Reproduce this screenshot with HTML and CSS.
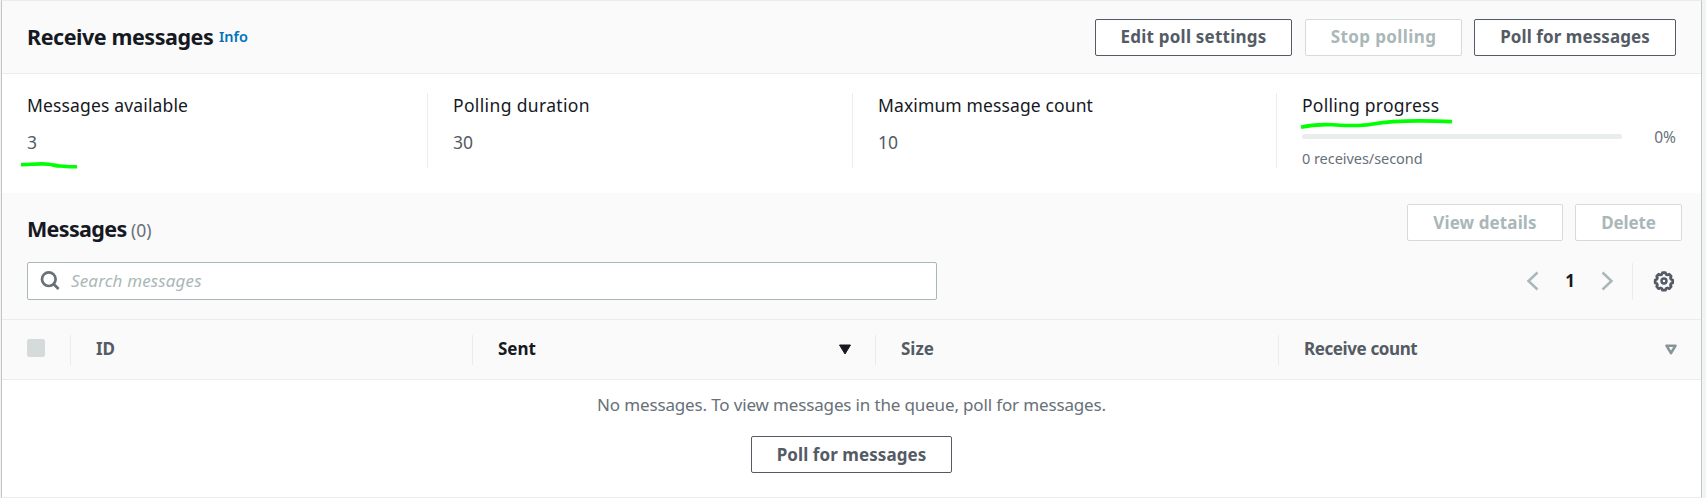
FILE: index.html
```html
<!DOCTYPE html>
<html lang="en">
<head>
<meta charset="utf-8">
<title>Receive messages</title>
<link rel="stylesheet" href="styles.css">
</head>
<body>
<main class="panel">
  <header class="panel-header">
    <h2 class="title title-main">Receive messages</h2>
    <a class="info">Info</a>
    <div class="actions">
      <button class="btn btn-edit">Edit poll settings</button>
      <button class="btn btn-stop" disabled>Stop polling</button>
      <button class="btn btn-poll">Poll for messages</button>
    </div>
  </header>

  <section class="stats">
    <div class="stat">
      <div class="label">Messages available</div>
      <div class="value">3</div>
      <svg class="mark mark-count" width="60" height="10" viewBox="0 0 60 10"><path d="M1 4.6C10 4.6 20 3.2 29 4.2C34 5 36 6 40 6C46 6 50 7.4 57 6.6"/></svg>
    </div>
    <div class="stat">
      <div class="label label-duration">Polling duration</div>
      <div class="value">30</div>
    </div>
    <div class="stat">
      <div class="label label-max">Maximum message count</div>
      <div class="value">10</div>
    </div>
    <div class="stat stat-progress">
      <div class="label label-progress">Polling progress</div>
      <div class="progress"><div class="track"></div><span class="percent">0%</span></div>
      <div class="rate">0 receives/second</div>
      <svg class="mark mark-progress" width="156" height="14" viewBox="0 0 156 14"><path d="M2 9.2C12 6.8 23 6.2 34 6.8C48 7.6 60 8.6 74 6C95 2.2 118 2.2 153 3.6"/></svg>
    </div>
  </section>

  <section class="messages-header">
    <div class="messages-top">
      <h2 class="title title-messages">Messages</h2>
      <span class="count">(0)</span>
      <div class="actions">
        <button class="btn btn-view" disabled>View details</button>
        <button class="btn btn-delete" disabled>Delete</button>
      </div>
    </div>
    <div class="tools">
      <div class="search">
        <svg width="20" height="20" viewBox="0 0 20 20"><circle cx="8.8" cy="8.2" r="6.8"/><path d="M13.6 13l5 5"/></svg>
        <span class="placeholder">Search messages</span>
      </div>
      <div class="pager">
        <svg class="chevron" width="13" height="20" viewBox="0 0 13 20"><path d="M11.5 1.5L2.5 10l9 8.5"/></svg>
        <span class="page">1</span>
        <svg class="chevron" width="13" height="20" viewBox="0 0 13 20"><path d="M1.5 1.5l9 8.5-9 8.5"/></svg>
        <span class="pager-rule"></span>
        <svg class="gear" width="22" height="22" viewBox="0 0 22 22">
          <path d="M9.4 2.1h3.2l.7 1.8 1.5.6 1.800-.8 2.200 2.200-.8 1.800.6 1.500 1.800.7v3.200l-1.800.7-.6 1.500.8 1.800-2.200 2.200-1.800-.8-1.500.6-.7 1.800H9.400l-.7-1.800-1.500-.6-1.800.8-2.200-2.200.8-1.800-.6-1.500-1.800-.7V9.900l1.800-.7.6-1.500-.8-1.800 2.200-2.200 1.800.8 1.500-.6z" transform="translate(.7 .75) scale(.93)" stroke-width="2.900"/>
          <circle cx="11" cy="11" r="2.500" stroke-width="2.400"/>
        </svg>
      </div>
    </div>
  </section>

  <div class="table-head">
    <div class="cell"><span class="checkbox"></span></div>
    <div class="cell"><span class="head">ID</span></div>
    <div class="cell sorted"><span class="head">Sent</span><svg width="13" height="11" viewBox="0 0 13 11"><path d="M1.500 1h11L7 10z" fill="#16191f" stroke="#16191f" stroke-linejoin="round"/></svg></div>
    <div class="cell"><span class="head">Size</span></div>
    <div class="cell"><span class="head head-receive">Receive count</span><svg width="13" height="11" viewBox="0 0 13 11"><path d="M2.500 1.700h9L7 9.200z" fill="none" stroke="#879596" stroke-width="2.600" stroke-linejoin="round"/></svg></div>
  </div>

  <section class="empty">
    <p class="empty-text">No messages. To view messages in the queue, poll for messages.</p>
    <button class="btn btn-poll btn-empty">Poll for messages</button>
  </section>
</main>
</body>
</html>
```
FILE: styles.css
```css
* { box-sizing: border-box; }
body {
  margin: 0;
  height: 498px;
  padding: 0 4px 0 1px;
  overflow: hidden;
  background: #f2f3f3;
  color: #16191f;
  font-family: "Noto Sans", "Open Sans", sans-serif;
  font-size: 17px;
  line-height: 24px;
}
.panel {
  height: 498px;
  border: 1px solid #eaeded;
  border-left-color: #c0c6c6;
  border-right-color: #c0c6c6;
  background: #fff;
}
.panel-header {
  display: flex;
  align-items: center;
  height: 73px;
  padding: 0 25px;
  border-bottom: 1px solid #eaeded;
  background: #fafafa;
}
.title { margin: 0; font-size: 21.5px; font-weight: 700; line-height: 28px; white-space: nowrap; }
.title-main { width: 192px; letter-spacing: -0.45px; }
.title-messages { width: 104px; letter-spacing: -0.65px; }
.info { color: #0073bb; font-size: 14.5px; font-weight: 600; line-height: 22px; margin-bottom: 2px; }
.actions { display: flex; gap: 12px; margin-left: auto; }
.btn {
  height: 37px;
  padding: 0;
  border: 1px solid #545b64;
  border-radius: 2px;
  background: #fff;
  color: #545b64;
  font: 700 17px/24px "Noto Sans", "Open Sans", sans-serif;
  white-space: nowrap;
}
.btn:disabled { border-color: #d5dbdb; color: #aab7b8; }
.btn-edit { width: 197px; margin-right: 1px; letter-spacing: 0.22px; }
.btn-stop { width: 157px; letter-spacing: 0.4px; }
.btn-poll { width: 202px; letter-spacing: 0.08px; }
.btn-empty { width: 201px; }
.btn-view { width: 156px; letter-spacing: 0.1px; }
.btn-delete { width: 107px; letter-spacing: -0.1px; }
.stats {
  display: grid;
  grid-template-columns: 425px 425px 424px 1fr;
  height: 119px;
  padding: 19px 0 25px;
}
.stat { position: relative; height: 75px; padding-left: 25px; }
.stat + .stat { border-left: 1px solid #eaeded; }
.label { font-size: 17.5px; line-height: 24px; letter-spacing: 0.15px; white-space: nowrap; }
.label-duration { letter-spacing: 0.35px; }
.label-max { letter-spacing: 0.12px; }
.label-progress { letter-spacing: 0.25px; }
.value { margin-top: 13px; line-height: 25px; font-size: 17.5px; color: #545b64; }
.stat-progress { padding-right: 25px; }
.progress { display: flex; align-items: center; justify-content: space-between; height: 20px; margin-top: 9px; }
.track { width: 320px; height: 5px; border-radius: 3px; background: #eaeded; }
.percent, .rate { color: #687078; font-size: 14.5px; }
.percent { padding-top: 1px; font-size: 15.5px; }
.rate { line-height: 22px; margin-top: 1px; letter-spacing: -0.05px; }
.mark { position: absolute; fill: none; stroke: #0f0; stroke-width: 3.6; }
.mark-count { left: 18px; top: 67px; }
.mark-progress { left: 22px; top: 25px; }
.messages-header {
  height: 127px;
  padding: 11px 19px 0 25px;
  border-bottom: 1px solid #eaeded;
  background: #fafafa;
}
.messages-top { display: flex; height: 58px; }
.messages-top .title { margin-top: 11px; }
.count { margin-top: 11px; color: #687078; font-size: 17.5px; line-height: 30px; }
.tools { display: flex; justify-content: space-between; height: 38px; }
.search {
  display: flex;
  align-items: center;
  width: 910px;
  padding-left: 12px;
  border: 1px solid #aab7b8;
  border-radius: 2px;
  background: #fff;
}
.search svg { fill: none; stroke: #687078; stroke-width: 2.7; }
.placeholder { margin-left: 11px; color: #aab7b8; font-style: italic; letter-spacing: 0.15px; }
.pager { display: flex; align-items: center; padding-right: 7px; }
.chevron { fill: none; stroke: #aab7b8; stroke-width: 2.5; }
.page { width: 62px; text-align: center; font-weight: 700; }
.pager-rule { width: 1px; height: 37px; margin: 0 20px 0 18px; background: #eaeded; }
.gear { fill: none; stroke: #545b64; stroke-linejoin: round; }
.table-head {
  display: grid;
  grid-template-columns: 68px 402px 403px 403px 1fr;
  align-items: center;
  height: 60px;
  border-bottom: 1px solid #eaeded;
  background: #fafafa;
  color: #545b64;
  font-weight: 700;
}
.cell { display: flex; align-items: center; justify-content: space-between; height: 30px; padding: 0 24px 0 25px; }
.cell + .cell { border-left: 1px solid #eaeded; }
.head { margin-bottom: 2px; }
.head-receive { letter-spacing: -0.4px; }
.sorted { color: #16191f; }
.checkbox { width: 18px; height: 18px; margin-top: -3px; border-radius: 2px; background: #d5dbdb; }
.empty { display: flex; flex-direction: column; align-items: center; }
.empty-text { margin: 13px 0 19px; color: #687078; letter-spacing: -0.15px; white-space: nowrap; }
```
